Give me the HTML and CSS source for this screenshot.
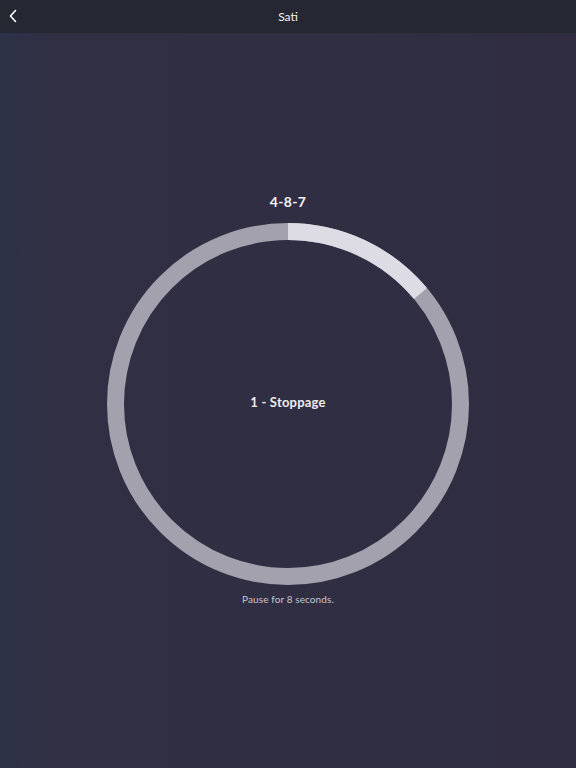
FILE: index.html
```html
<!DOCTYPE html>
<html>
<head>
<meta charset="utf-8">
<link rel="stylesheet" href="styles.css">
</head>
<body>
<header class="nav">
  <button class="back" aria-label="Back">
    <svg width="10" height="14" viewBox="0 0 10 14"><path d="M7.5 1.5 L2.5 7 L7.5 12.5" fill="none" stroke="#fff" stroke-width="1.6" stroke-linecap="round" stroke-linejoin="round"/></svg>
  </button>
  <div class="title">Sati</div>
</header>
<main class="main">
  <div class="pattern">4-8-7</div>
  <div class="ring">
    <svg width="364" height="364" viewBox="0 0 364 364">
      <circle cx="182" cy="182" r="172.5" fill="none" stroke="#a2a1ad" stroke-width="17"/>
      <circle cx="182" cy="182" r="172.5" fill="none" stroke="#dddce5" stroke-width="17"
        stroke-dasharray="151 2000" transform="rotate(-90 182 182)"/>
    </svg>
    <div class="phase">1 - Stoppage</div>
  </div>
  <div class="hint">Pause for 8 seconds.</div>
</main>
</body>
</html>
```
FILE: styles.css
```css
html, body { margin: 0; padding: 0; }
body {
  width: 576px;
  height: 768px;
  overflow: hidden;
  font-family: Lato, "Noto Sans", sans-serif;
  background: linear-gradient(90deg, #2d3247 0px, #302f44 50px, #302d42 100%);
  color: #fff;
}
.nav {
  height: 33px;
  background: #252733;
  display: flex;
  align-items: center;
  justify-content: center;
  position: relative;
}
.back {
  position: absolute;
  left: 6px;
  top: 9px;
  background: none;
  border: 0;
  padding: 0;
  width: 14px;
  height: 14px;
  display: flex;
  align-items: center;
  justify-content: center;
}
.title {
  font-size: 12px;
  color: #f2f2f5;
  font-weight: 400;
}
.main {
  display: flex;
  flex-direction: column;
  align-items: center;
  padding-top: 160px;
}
.pattern {
  font-size: 14px;
  font-weight: 700;
  color: #f4f4f7;
  line-height: 17px;
  letter-spacing: 0.3px;
}
.ring {
  margin-top: 12px;
  width: 364px;
  height: 364px;
  display: flex;
  align-items: center;
  justify-content: center;
  position: relative;
}
.ring svg { position: absolute; left: 0; top: 0; }
.phase {
  position: relative;
  top: -2px;
  font-size: 13px;
  font-weight: 700;
  color: #ececf0;
  letter-spacing: 0.2px;
}
.hint {
  margin-top: 7px;
  font-size: 10px;
  color: #c6c5cf;
  letter-spacing: 0.1px;
}
```
